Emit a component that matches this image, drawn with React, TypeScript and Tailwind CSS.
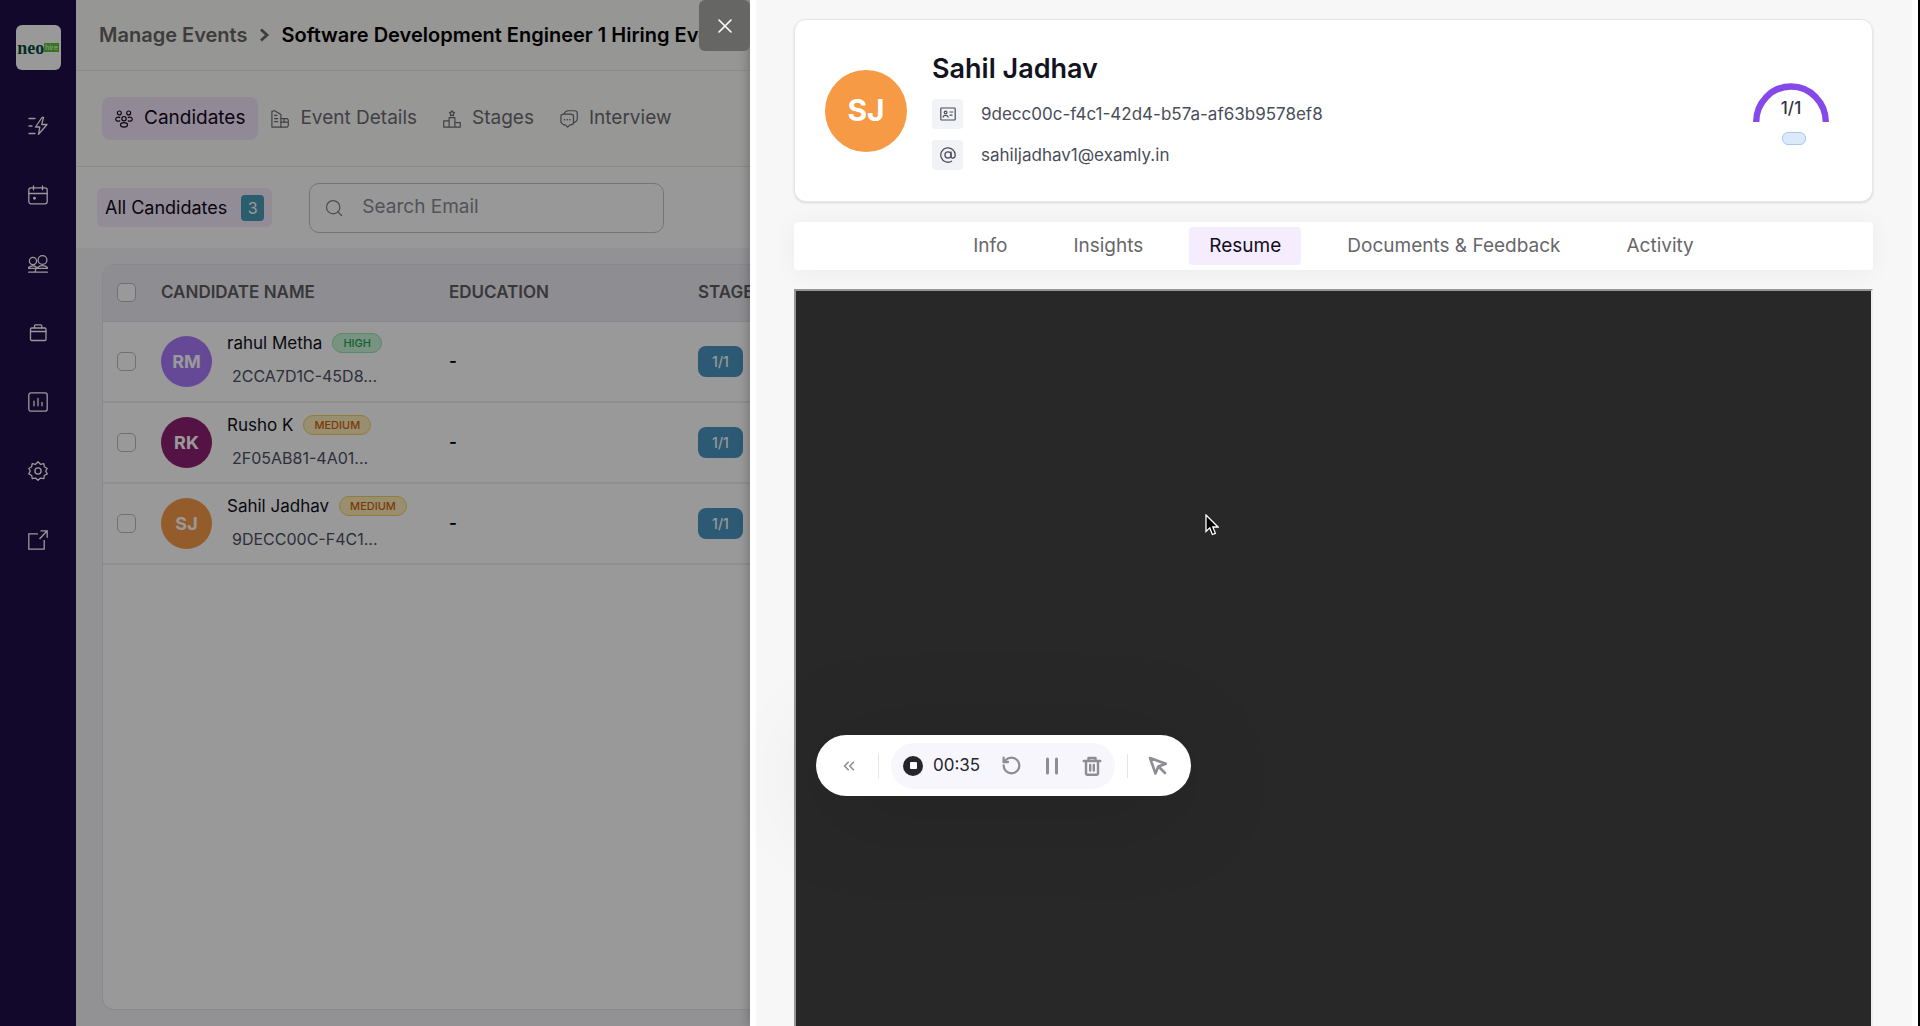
import { useState } from "react";
import type { ReactNode } from "react";
import { ChevronsLeft, RotateCcw, Search, X } from "lucide-react";
import { clsx } from "clsx";

interface IconProps {
  children: ReactNode;
  className?: string;
  strokeWidth?: number;
}

function Icon({ children, className = "size-5", strokeWidth = 1.3 }: IconProps) {
  return (
    <svg
      viewBox="0 0 20 20"
      className={clsx("shrink-0", className)}
      fill="none"
      stroke="currentColor"
      strokeWidth={strokeWidth}
      strokeLinecap="round"
      strokeLinejoin="round"
      aria-hidden="true"
    >
      {children}
    </svg>
  );
}

const navItems = [
  {
    label: "Quick actions",
    icon: (
      <>
        <path d="M1 2.5h6M1 10h3M1 17.5h6" />
        <path d="M14 1.5 7.5 11h4.3l-1.3 7.3L19 8.5h-5.3l1.8-7Z" />
      </>
    ),
  },
  {
    label: "Events",
    icon: (
      <>
        <rect x="0.8" y="2.8" width="18.4" height="16" rx="2.2" />
        <path d="M1 8.5h18M5.5.8v4M14.5.8v4" />
        <circle cx="6.5" cy="13.3" r="0.8" fill="currentColor" />
      </>
    ),
  },
  {
    label: "Candidates",
    icon: (
      <>
        <circle cx="5" cy="7" r="3.6" />
        <circle cx="14.5" cy="6" r="4.4" />
        <path d="M.6 13.5c2-2.200 6-2.400 8 0M9.500 13.500c2.500-2.400 7.500-2.400 9.900 0M7 18c.2-2.400 1-3.600 2.500-4.500M.6 14.300h6.900M9.500 14.300h9.900M.6 18.200h18.800" />
      </>
    ),
  },
  {
    label: "Jobs",
    icon: (
      <>
        <rect x="2.5" y="5" width="15.5" height="12.5" rx="1.2" />
        <path d="M2.500 8.500H18M6.500 5V2.800c0-.6.4-1 1-1h5.300c.6 0 1 .4 1 1V5" />
      </>
    ),
  },
  {
    label: "Reports",
    icon: (
      <>
        <rect x="0.8" y="0.8" width="18.4" height="18.4" rx="2.2" />
        <path d="M6 9.200v4.600M10 6.300v7.500M14 10.500v3.300" />
      </>
    ),
  },
  {
    label: "Settings",
    icon: (
      <>
        <circle cx="10" cy="10" r="3.1" />
        <path d="M10 .8 12.400 3.300l3.400-.7.600 3.200 2.800 1.700L17.700 10l1.500 2.900-2.900 1.600-.5 3.100-3.300-.5L10 19.300l-2.400-2.200-3.300.5-.6-3.100-2.900-1.600L2.300 10 .8 7.500l2.800-1.700.6-3.200 3.400.7Z" />
      </>
    ),
  },
  {
    label: "Open in new window",
    icon: (
      <path
        strokeLinecap="butt"
        strokeLinejoin="miter"
        d="M10 3.800H.8v15.400h15.400V10M11.500 9 19 1M12.500.8h6.700v7"
      />
    ),
  },
];

const eventTabs = [
  {
    label: "Candidates",
    icon: (
      <>
        <circle cx="4.8" cy="3.3" r="2.2" />
        <circle cx="15.2" cy="3.3" r="2.2" />
        <circle cx="10" cy="9.6" r="2.4" />
        <path d="M5.300 8.200C2.500 7.400.8 8.700.8 10.300s1.700 2.500 4.500 1.800M14.700 8.200c2.800-.8 4.500.5 4.500 2.100s-1.700 2.500-4.500 1.800" />
        <ellipse cx="10" cy="16.5" rx="3.9" ry="2.5" />
      </>
    ),
  },
  {
    label: "Event Details",
    icon: (
      <>
        <path d="M11 19H1V1.500l3-.7 7 4.200v14M4 6h2.500M4 9.500h3.500M4 13h3.500" />
        <path d="M11 9.500h7l1.200 1.500v6.500L18 19h-7M11 13.500h8M14.500 10v4" />
      </>
    ),
  },
  {
    label: "Stages",
    icon: (
      <>
        <path d="M.8 19v-7h6v7M6.800 19V8.500h6.400V19M13.200 14h6v5M.8 19h18.400" />
        <path d="m10 .8 1 1.600 1.800.5-1.200 1.500.1 1.900-1.700-.6-1.700.6.1-1.900-1.200-1.500 1.800-.5Z" />
      </>
    ),
  },
  {
    label: "Interview",
    icon: (
      <>
        <path d="M4 4.500h8c1.700 0 3 1.300 3 3v6c0 1.700-1.300 3-3 3h-1L8.500 19 6 16.500H4l-3-2.800V7.500c0-1.700 1.300-3 3-3Z" />
        <path d="M4.500 4.300C5.500 1.800 7 .8 9 .8h7c2 0 3.200 1.300 3.200 3v6c0 2-1.500 3.700-4 4.200" />
        <path d="M5 10.800h.1M8 10.800h.1M11 10.800h.1" strokeWidth="1.8" />
      </>
    ),
  },
];

const candidates = [
  {
    initials: "RM",
    name: "rahul Metha",
    id: "2CCA7D1C-45D8...",
    level: "HIGH",
    avatar: "bg-[#a87afa]",
  },
  {
    initials: "RK",
    name: "Rusho K",
    id: "2F05AB81-4A01...",
    level: "MEDIUM",
    avatar: "bg-[#8c1f74]",
  },
  {
    initials: "SJ",
    name: "Sahil Jadhav",
    id: "9DECC00C-F4C1...",
    level: "MEDIUM",
    avatar: "bg-[#f79a46]",
  },
];

const drawerTabs = ["Info", "Insights", "Resume", "Documents & Feedback", "Activity"];

function Sidebar() {
  return (
    <aside className="flex w-[76px] shrink-0 flex-col items-center bg-[#1f0e48] pt-[25px]">
      <a
        href="#home"
        className="flex size-[45px] items-center justify-center overflow-hidden rounded-md bg-white"
      >
        <span className="font-['Liberation_Serif'] text-[18px] leading-5 font-bold text-[#0b4a40]">
          neo
        </span>
        <span className="bg-[#5cc234] px-px text-[7px] leading-[9px] text-white">hire</span>
      </a>
      <nav className="mt-[46px] flex flex-col gap-[49px] text-white">
        {navItems.map((item) => (
          <button key={item.label} aria-label={item.label} className="size-5">
            <Icon>{item.icon}</Icon>
          </button>
        ))}
      </nav>
    </aside>
  );
}

function LevelBadge({ level }: { level: string }) {
  return (
    <span
      className={clsx(
        "rounded-full border px-2.5 text-[11px] leading-[18px] font-medium",
        level === "HIGH"
          ? "border-[#8fe6ad] bg-[#c8f5d7] text-[#1fa34d]"
          : "border-[#f5cf5e] bg-[#fdeebb] text-[#d2600c]"
      )}
    >
      {level}
    </span>
  );
}

function Checkbox({ label }: { label: string }) {
  return (
    <input
      type="checkbox"
      aria-label={label}
      className="block size-[19px] appearance-none rounded-[5px] border border-[#b9bac4] bg-white"
    />
  );
}

function CandidateTable() {
  return (
    <section className="mx-[26px] my-4 grow overflow-hidden rounded-xl border border-[#e3e3ec] bg-white">
      <table className="w-full table-fixed text-left">
        <colgroup>
          <col className="w-[58px]" />
          <col className="w-[288px]" />
          <col className="w-[249px]" />
          <col />
        </colgroup>
        <thead>
          <tr className="h-[56px] border-b border-[#e3e3ec] bg-[#edecf3] text-[17px] leading-6 text-[#5e5e5e]">
            <th className="pl-3.5">
              <Checkbox label="Select all candidates" />
            </th>
            <th className="pb-0.5 font-semibold">CANDIDATE NAME</th>
            <th className="pb-0.5 font-semibold">EDUCATION</th>
            <th className="pb-0.5 font-semibold">STAGE</th>
          </tr>
        </thead>
        <tbody>
          {candidates.map((candidate) => (
            <tr key={candidate.id} className="h-[81px] border-b-2 border-[#efeff3]">
              <td className="pl-3.5">
                <Checkbox label={`Select ${candidate.name}`} />
              </td>
              <td>
                <div className="flex items-center gap-[15px]">
                  <span
                    className={clsx(
                      "flex size-[51px] items-center justify-center rounded-full text-[18px] font-bold text-white",
                      candidate.avatar
                    )}
                  >
                    {candidate.initials}
                  </span>
                  <div className="flex flex-col gap-[9px] pb-[3px] leading-6">
                    <div className="flex items-center gap-2.5 text-[17px] text-[#10101e]">
                      {candidate.name}
                      <LevelBadge level={candidate.level} />
                    </div>
                    <span className="pl-[5px] text-[16px] text-[#4b5065]">{candidate.id}</span>
                  </div>
                </div>
              </td>
              <td className="text-[17px] font-semibold">-</td>
              <td>
                <span className="flex h-[31px] w-[45px] items-center justify-center rounded-lg bg-[#4a94c0] text-[14px] font-medium text-white">
                  1/1
                </span>
              </td>
            </tr>
          ))}
        </tbody>
      </table>
    </section>
  );
}

function EventPage() {
  return (
    <main className="flex min-w-0 grow flex-col bg-[#f3f3f7]">
      <header className="flex h-[71px] items-center border-b border-[#e8e8ec] bg-[#fafaf8] pl-[23px] text-[20px] font-semibold whitespace-nowrap">
        <a href="#events" className="text-[#666666]">
          Manage Events
        </a>
        <Icon className="mx-[7px] size-5 text-[#666666]" strokeWidth={2.8}>
          <path d="m7 4.5 6 5.500-6 5.500" strokeLinecap="butt" strokeLinejoin="miter" />
        </Icon>
        <h1>Software Development Engineer 1 Hiring Event</h1>
      </header>

      <nav className="flex h-24 items-center border-b border-[#e6e6ea] bg-[#fcfcfa] pl-[26px] text-[19px] text-[#6c6c72]">
        {eventTabs.map((tab, index) => (
          <button
            key={tab.label}
            className={clsx(
              "flex h-[43px] items-center gap-[11px] rounded-lg px-[13px]",
              index === 0 && "bg-[#f2e6fa] text-[#14061f]"
            )}
          >
            <Icon className="size-[18px]">{tab.icon}</Icon>
            {tab.label}
          </button>
        ))}
      </nav>

      <div className="flex h-[81px] items-center gap-[37px] bg-[#fdfdfd] pl-[21px]">
        <button className="flex h-[39px] items-center gap-3.5 rounded-md bg-[#f4eafb] px-2 text-[18px] text-[#100818]">
          All Candidates
          <span className="flex h-[26px] w-[23px] items-center justify-center rounded bg-[#4a9bba] text-[16px] text-white">
            3
          </span>
        </button>
        <label className="flex h-[50px] w-[355px] items-center gap-[18px] rounded-[10px] border border-[#c3c2ca] px-3.5 text-[#808088]">
          <Search className="size-5 shrink-0" strokeWidth={1.5} />
          <input
            type="text"
            aria-label="Search Email"
            placeholder="Search Email"
            className="w-full min-w-0 bg-transparent text-[19px] outline-none placeholder:text-[#8a8a92]"
          />
        </label>
      </div>

      <CandidateTable />
    </main>
  );
}

function StageGauge() {
  return (
    <div className="flex flex-col items-center pt-1.5">
      <div className="relative h-[39px] w-[76px]">
        <svg viewBox="0 0 76 39" className="size-full" fill="none" aria-hidden="true">
          <path d="M3.200 39A34.800 35.500 0 0 1 72.800 39" stroke="#8549ea" strokeWidth="6.4" />
        </svg>
        <span className="absolute inset-x-0 bottom-1 text-center text-[17px] leading-5 font-medium text-[#33343f]">
          1/1
        </span>
      </div>
      <span className="mt-2.5 ml-1.5 h-[13px] w-6 rounded-md border border-[#a5c8f5] bg-[#dce9fb]" />
    </div>
  );
}

function ProfileCard() {
  return (
    <section className="flex items-center rounded-xl border border-[#e6e7e8] bg-white py-[31px] pr-[43px] pl-[30px] shadow-sm">
      <span className="flex size-[82px] shrink-0 items-center justify-center rounded-full bg-[#f69a45] text-[30px] font-bold text-white">
        SJ
      </span>
      <div className="ml-[25px] grow text-[17px] leading-6 text-[#4a4d5a]">
        <h2 className="text-[27px] leading-9 font-semibold text-[#13131f]">Sahil Jadhav</h2>
        <div className="mt-3 flex items-center gap-[18px]">
          <span className="flex h-[30px] w-[31px] items-center justify-center rounded bg-[#f1f3f6]">
            <Icon className="size-4" strokeWidth={1.5}>
              <rect x="1" y="2.5" width="18" height="15" rx="1" />
              <circle cx="7" cy="8" r="1.7" />
              <path d="M3.800 14c.6-3 5.800-3 6.400 0M12.500 7.500H16M12.500 11.500H15" />
            </Icon>
          </span>
          9decc00c-f4c1-42d4-b57a-af63b9578ef8
        </div>
        <div className="mt-[11px] flex items-center gap-[18px]">
          <span className="flex h-[30px] w-[31px] items-center justify-center rounded bg-[#f1f2f5]">
            <Icon className="size-4" strokeWidth={1.6}>
              <circle cx="10" cy="10" r="3.8" />
              <path d="M13.800 6.200v5c0 4 5.200 3.200 5.200-1.200a9 9 0 1 0-4.500 7.800" />
            </Icon>
          </span>
          sahiljadhav1@examly.in
        </div>
      </div>
      <StageGauge />
    </section>
  );
}

function CandidateDrawer() {
  const [activeTab, setActiveTab] = useState("Resume");

  return (
    <div className="fixed inset-y-0 right-0 left-[750px] border-r-2 border-black bg-white px-1.5 shadow-[0_0_12px_rgba(0,0,0,0.3)]">
      <button
        aria-label="Close"
        className="absolute top-0 right-full flex size-[51px] items-center justify-center rounded-md bg-[#666765] text-white"
      >
        <X className="size-6" strokeWidth={1.6} />
      </button>
      <div className="flex h-full flex-col overflow-hidden bg-[#f7f7f7] pt-[19px] pr-[39px] pl-[38px]">
        <ProfileCard />
        <nav className="mt-5 flex h-12 shrink-0 items-center justify-center gap-[26px] rounded-sm bg-white text-[19px] text-[#67676a] shadow-[0_2px_24px_rgba(0,0,0,0.05)]">
          {drawerTabs.map((tab) => (
            <button
              key={tab}
              onClick={() => setActiveTab(tab)}
              className={clsx(
                "h-[38px] rounded-sm px-5",
                activeTab === tab && "bg-[#f5edfd] text-[#120c1c]"
              )}
            >
              {tab}
            </button>
          ))}
        </nav>
        <div className="mt-[19px] grow border-2 border-b-0 border-t-[#969696] border-r-[#eeeeee] border-l-[#969696] bg-[#282828]" />
      </div>
    </div>
  );
}

function RecorderBar() {
  return (
    <div className="fixed bottom-[230px] left-[816px] flex h-[61px] w-[375px] items-center rounded-full bg-white pl-6 text-[#8e8d96] shadow-[0_12px_100px_rgba(0,0,0,0.15)]">
      <button aria-label="Collapse">
        <ChevronsLeft className="size-[18px]" strokeWidth={2.2} />
      </button>
      <span className="ml-5 h-6 w-px bg-[#e4e4ea]" />
      <div className="ml-3 flex h-[46px] w-[224px] items-center rounded-full bg-[#f7f6fc] pl-3">
        <button
          aria-label="Stop"
          className="flex size-5 items-center justify-center rounded-full bg-[#25252c]"
        >
          <span className="size-[7px] rounded-[1px] bg-white" />
        </button>
        <span className="ml-2.5 w-[68px] text-[17px] text-[#25252c]">00:35</span>
        <button aria-label="Restart">
          <RotateCcw className="size-[21px]" strokeWidth={2.6} />
        </button>
        <button aria-label="Pause" className="ml-5">
          <Icon className="size-5" strokeWidth={3}>
            <path d="M5.500 3v14M14.500 3v14" />
          </Icon>
        </button>
        <button aria-label="Delete" className="ml-5">
          <Icon className="size-5" strokeWidth={2.4}>
            <path d="M1.800 5h16.400M6.500 4.500V2h7v2.500M4 5.500V17c0 1 .6 1.700 1.600 1.700h8.800c1 0 1.600-.7 1.600-1.700V5.500M8.200 9v5.500M11.800 9v5.500" />
          </Icon>
        </button>
      </div>
      <span className="ml-3 h-6 w-px bg-[#e4e4ea]" />
      <button aria-label="Pointer" className="ml-5">
        <Icon className="size-5" strokeWidth={2.6}>
          <path d="m2 2 5.500 15.500 2.800-7 7.500-2.700ZM11 11l6 6" />
        </Icon>
      </button>
    </div>
  );
}

export default function App() {
  return (
    <div className="flex min-h-screen overflow-hidden font-[Inter,sans-serif]">
      <Sidebar />
      <EventPage />
      <div className="fixed inset-0 bg-black/40" />
      <CandidateDrawer />
      <RecorderBar />
      {/* mouse pointer */}
      <svg
        viewBox="0 0 14 22"
        className="pointer-events-none fixed top-[514px] left-[1205px] h-[22px] w-3.5"
        aria-hidden="true"
      >
        <path
          d="M1 1v16.500l3.800-3.600 2.600 6.600 3-1.200-2.600-6.300h5.200Z"
          fill="black"
          stroke="white"
          strokeWidth="1.3"
        />
      </svg>
    </div>
  );
}
